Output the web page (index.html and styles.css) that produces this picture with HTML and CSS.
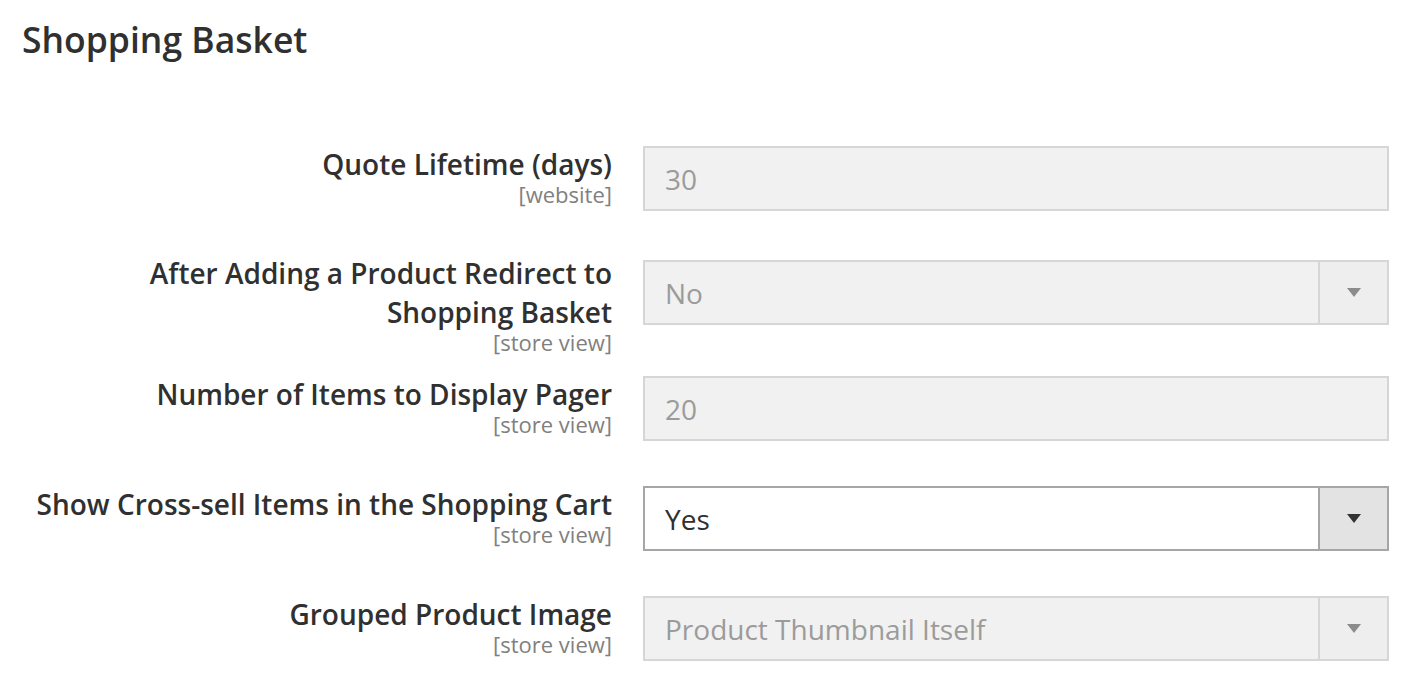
FILE: index.html
```html
<!DOCTYPE html>
<html>
<head>
<meta charset="utf-8">
<title>Shopping Basket</title>
<link rel="stylesheet" href="styles.css">
</head>
<body>
<div class="page">
	<h1 class="title">Shopping Basket</h1>
	<div class="form">
		<div class="row row-first">
			<div class="label">
				<span class="name">Quote Lifetime (days)</span>
				<span class="scope">[website]</span>
			</div>
			<div class="field disabled"><span class="value">30</span></div>
		</div>
		<div class="row row-wrap">
			<div class="label label-wrap">
				<span class="name">After Adding a Product Redirect to<br>Shopping Basket</span>
				<span class="scope">[store view]</span>
			</div>
			<div class="field select disabled"><span class="value">No</span><span class="arrow"></span></div>
		</div>
		<div class="row">
			<div class="label">
				<span class="name">Number of Items to Display Pager</span>
				<span class="scope">[store view]</span>
			</div>
			<div class="field disabled"><span class="value">20</span></div>
		</div>
		<div class="row">
			<div class="label">
				<span class="name">Show Cross-sell Items in the Shopping Cart</span>
				<span class="scope">[store view]</span>
			</div>
			<div class="field select"><span class="value">Yes</span><span class="arrow"></span></div>
		</div>
		<div class="row">
			<div class="label">
				<span class="name">Grouped Product Image</span>
				<span class="scope">[store view]</span>
			</div>
			<div class="field select disabled"><span class="value">Product Thumbnail Itself</span><span class="arrow"></span></div>
		</div>
	</div>
</div>
</body>
</html>
```

FILE: styles.css
```css
html, body {margin:0px;padding:0px;background:#fff;}
body {font-family:"Open Sans", "Liberation Sans", sans-serif;color:#303030;}
.page {padding:18px 0 0 0;}
.title {margin:0px;padding:0 0 0 22px;font-size:35.5px;line-height:42px;font-weight:600;color:#303030;}
.form {margin:86px 0 0 0;}
.row {display:flex;align-items:flex-start;gap:31px;margin:0 0 45px 0;}
.row-first {margin-bottom:49px;}
.row-wrap {margin-bottom:23px;}
.label {width:612px;text-align:right;margin-top:-1px;}
.label-wrap {margin-top:-6px;}
.label .name {display:block;font-size:28px;line-height:39px;font-weight:600;color:#303030;}
.label .scope {display:block;font-size:22px;line-height:22px;margin-top:-1px;color:#808080;}
.field {width:746px;height:65px;box-sizing:border-box;border:2px solid #a6a6a6;background:#fff;display:flex;align-items:center;}
.field .value {flex:1;padding:0 0 0 20px;font-size:28px;color:#303030;}
.field.disabled {border-color:#d6d6d6;background:#f1f1f1;}
.field.disabled .value {color:#9b9b9b;}
.select .arrow {width:67px;height:100%;border-left:2px solid #a6a6a6;background:#e3e3e3;display:flex;align-items:center;justify-content:center;}
.select .arrow:after {content:"";width:0;height:0;border-left:7px solid transparent;border-right:7px solid transparent;border-top:9px solid #333;}
.select.disabled .arrow {border-left-color:#d6d6d6;background:#eeeeee;}
.select.disabled .arrow:after {border-top-color:#8c8c8c;}
```
